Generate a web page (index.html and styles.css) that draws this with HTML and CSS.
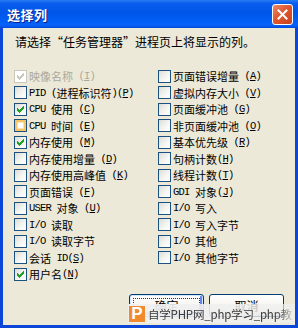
FILE: index.html
```html
<!DOCTYPE html>
<html lang="zh-CN">
<head>
  <meta charset="UTF-8">
  <meta name="viewport" content="width=device-width, initial-scale=1.0">
  <title>选择列</title>
  <link rel="stylesheet" href="styles.css">
</head>
<body>

<div class="window">
  <div class="titlebar">
    <span class="title">选择列</span>
    <span class="close">
      <svg width="11" height="11" viewBox="0 0 11 11"><path d="M1.5 1.5L9.5 9.5M9.5 1.5L1.5 9.5" stroke="#fff" stroke-width="2" stroke-linecap="square"/></svg>
    </span>
  </div>

  <div class="client">
    <p class="intro">请选择“任务管理器”进程页上将显示的列。</p>

    <div class="columns">
      <div class="col">
        <label class="item disabled"><span class="box"><svg class="tick" width="7" height="7" viewBox="0 0 7 7"><path d="M6 0H7V3H6V4H5V5H4V6H3V7H2V6H1V5H0V2H1V3H2V4H3V3H4V2H5V1H6Z"/></svg></span>映像名称<span class="en"> (<u>I</u>)</span></label>
        <label class="item"><span class="box"></span><span class="en">PID (</span>进程标识符<span class="en">)(<u>P</u>)</span></label>
        <label class="item"><span class="box"><svg class="tick" width="7" height="7" viewBox="0 0 7 7"><path d="M6 0H7V3H6V4H5V5H4V6H3V7H2V6H1V5H0V2H1V3H2V4H3V3H4V2H5V1H6Z"/></svg></span><span class="en">CPU </span>使用<span class="en"> (<u>C</u>)</span></label>
        <label class="item"><span class="box hot"></span><span class="en">CPU </span>时间<span class="en"> (<u>E</u>)</span></label>
        <label class="item"><span class="box"><svg class="tick" width="7" height="7" viewBox="0 0 7 7"><path d="M6 0H7V3H6V4H5V5H4V6H3V7H2V6H1V5H0V2H1V3H2V4H3V3H4V2H5V1H6Z"/></svg></span>内存使用<span class="en"> (<u>M</u>)</span></label>
        <label class="item"><span class="box"></span>内存使用增量<span class="en"> (<u>D</u>)</span></label>
        <label class="item"><span class="box"></span>内存使用高峰值<span class="en"> (<u>K</u>)</span></label>
        <label class="item"><span class="box"></span>页面错误<span class="en"> (<u>F</u>)</span></label>
        <label class="item"><span class="box"></span><span class="en">USER </span>对象<span class="en"> (<u>U</u>)</span></label>
        <label class="item"><span class="box"></span><span class="en">I/O </span>读取</label>
        <label class="item"><span class="box"></span><span class="en">I/O </span>读取字节</label>
        <label class="item"><span class="box"></span>会话<span class="en"> ID(<u>S</u>)</span></label>
        <label class="item"><span class="box"><svg class="tick" width="7" height="7" viewBox="0 0 7 7"><path d="M6 0H7V3H6V4H5V5H4V6H3V7H2V6H1V5H0V2H1V3H2V4H3V3H4V2H5V1H6Z"/></svg></span>用户名<span class="en">(<u>N</u>)</span></label>
      </div>

      <div class="col">
        <label class="item"><span class="box"></span>页面错误增量<span class="en"> (<u>A</u>)</span></label>
        <label class="item"><span class="box"></span>虚拟内存大小<span class="en"> (<u>V</u>)</span></label>
        <label class="item"><span class="box"></span>页面缓冲池<span class="en"> (<u>G</u>)</span></label>
        <label class="item"><span class="box"></span>非页面缓冲池<span class="en"> (<u>O</u>)</span></label>
        <label class="item"><span class="box"></span>基本优先级<span class="en"> (<u>R</u>)</span></label>
        <label class="item"><span class="box"></span>句柄计数<span class="en">(<u>H</u>)</span></label>
        <label class="item"><span class="box"></span>线程计数<span class="en">(<u>T</u>)</span></label>
        <label class="item"><span class="box"></span><span class="en">GDI </span>对象<span class="en">(<u>J</u>)</span></label>
        <label class="item"><span class="box"></span><span class="en">I/O </span>写入</label>
        <label class="item"><span class="box"></span><span class="en">I/O </span>写入字节</label>
        <label class="item"><span class="box"></span><span class="en">I/O </span>其他</label>
        <label class="item"><span class="box"></span><span class="en">I/O </span>其他字节</label>
      </div>
    </div>

    <div class="buttons">
      <button class="btn default"><span class="focus">确定</span></button>
      <button class="btn">取消</button>
    </div>
  </div>

  <div class="watermark">
    <span class="logo">P</span>
    <span class="wm-text">自学PHP网_php学习_php教</span>
  </div>
</div>

</body>
</html>
```

FILE: styles.css
```css
* { margin: 0; padding: 0; box-sizing: border-box; }
html, body {
  width: 298px;
  height: 328px;
  overflow: hidden;
  background: #0b46d8;
}

body {
  font-family: "Noto Sans CJK SC", sans-serif;
  font-size: 11px;
  color: #000;
}

.window {
  position: relative;
  width: 298px;
  height: 328px;
  display: flex;
  flex-direction: column;
  background: #0b46d8;
  padding: 0 3px 3px;
}

.titlebar {
  height: 28px;
  margin: 0 -3px;
  display: flex;
  align-items: center;
  justify-content: space-between;
  padding: 0 5px 0 7px;
  background: linear-gradient(to bottom, #2a7cf2 0%, #0a5ded 12%, #0055e8 45%, #0160f7 80%, #0a62f8 90%, #0048dc 100%);
}

.title {
  font-weight: bold;
  font-size: 13px;
  color: #fff;
  text-shadow: 1px 1px 0 #0a1f8a;
  letter-spacing: 0.5px;
}

.close {
  width: 21px;
  height: 21px;
  border: 1px solid #fff;
  border-radius: 3px;
  display: flex;
  align-items: center;
  justify-content: center;
  background: linear-gradient(135deg, #ec8a6a 0%, #e0572f 45%, #c9421c 100%);
}

.client {
  flex: 1;
  display: flex;
  flex-direction: column;
  background: #ece9d8;
  padding: 6px 11px 8px 11px;
}

.intro {
  font-size: 12px;
  line-height: 16px;
  font-feature-settings: "fwid";
  padding-left: 1px;
}

.columns {
  display: flex;
  margin-top: 18px;
}

.col {
  display: flex;
  flex-direction: column;
  flex: 1;
}

.col:first-child {
  flex: none;
  width: 144px;
}

.item {
  height: 16.5px;
  display: flex;
  align-items: center;
  white-space: nowrap;
}

.en {
  font-family: "Liberation Mono", monospace;
  font-size: 10.5px;
  letter-spacing: -0.8px;
  white-space: pre;
}

.item u { text-underline-offset: 1px; }

.box {
  width: 13px;
  height: 13px;
  flex: none;
  margin-right: 2px;
  display: flex;
  align-items: center;
  justify-content: center;
  border: 1px solid #1c5180;
  background: linear-gradient(135deg, #dcdcd7 0%, #f6f6f3 60%, #ffffff 100%);
}

.tick { fill: #21a121; shape-rendering: crispEdges; }

.box.hot {
  background: #fff;
  box-shadow: inset 0 0 0 2px #f8c46a, inset 0 0 0 3px #fbe3b0;
}

.item.disabled { color: #aca899; }
.item.disabled .box {
  border-color: #cac8bb;
  background: #fff;
}
.item.disabled .tick { fill: #cac8bb; }

.buttons {
  margin-top: auto;
  display: flex;
  justify-content: flex-end;
  gap: 5px;
}

.btn {
  width: 75px;
  height: 23px;
  font-family: "Noto Sans CJK SC", sans-serif;
  font-size: 12px;
  color: #000;
  border: 1px solid #003c74;
  border-radius: 3px;
  background: linear-gradient(to bottom, #ffffff 0%, #f4f3ee 60%, #ecebe6 85%, #d6d0c5 100%);
  display: flex;
  align-items: center;
  justify-content: center;
}

.btn.default {
  box-shadow: inset 0 0 0 1px #cee7ff, inset -1px -1px 0 2px #6982ee;
  padding: 3px;
}

.btn .focus {
  flex: 1;
  align-self: stretch;
  display: flex;
  align-items: center;
  justify-content: center;
  border: 1px dotted #333;
}

.watermark {
  position: absolute;
  left: 128px;
  top: 304px;
  width: 167px;
  height: 19px;
  display: flex;
  align-items: center;
  gap: 3px;
  padding-left: 1px;
  overflow: hidden;
  background: linear-gradient(to right, rgba(240, 240, 240, 0.95), rgba(240, 240, 240, 0.85) 70%, rgba(240, 240, 240, 0.6));
}

.logo {
  width: 16px;
  height: 16px;
  flex: none;
  background: #f08a2c;
  color: #fff;
  font-family: "Liberation Sans", sans-serif;
  font-weight: bold;
  font-size: 17px;
  line-height: 16px;
  text-align: center;
}

.wm-text {
  font-size: 11.5px;
  letter-spacing: -0.2px;
  color: #3a3a3a;
  white-space: nowrap;
  -webkit-mask-image: linear-gradient(to right, #000 88%, rgba(0, 0, 0, 0.25) 100%);
  mask-image: linear-gradient(to right, #000 88%, rgba(0, 0, 0, 0.25) 100%);
}
```
